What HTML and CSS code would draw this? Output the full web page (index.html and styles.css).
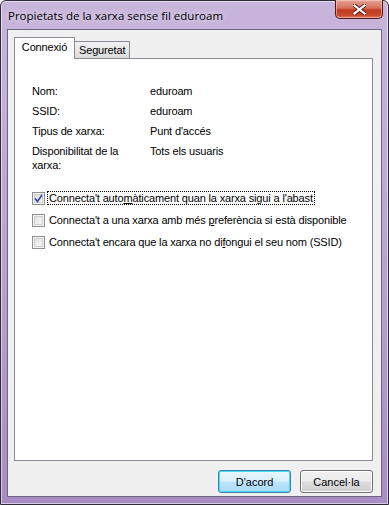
FILE: index.html
```html
<!DOCTYPE html>
<html lang="ca">
<head>
    <meta charset="UTF-8">
    <title>Propietats de la xarxa sense fil eduroam</title>
    <link rel="stylesheet" href="styles.css">
</head>
<body>
    <div class="finestra">
        <div class="barraTitol">
            <span class="titol">Propietats de la xarxa sense fil eduroam</span>
            <button class="tancar" title="Tanca">
                <svg width="13" height="11" viewBox="0 0 13 11">
                    <path d="M1.5 1.5 L11.5 9.5 M11.5 1.5 L1.5 9.5" stroke="#4a1a14" stroke-width="4" stroke-linecap="square"/>
                    <path d="M1.5 1.5 L11.5 9.5 M11.5 1.5 L1.5 9.5" stroke="#fff" stroke-width="2.2" stroke-linecap="square"/>
                </svg>
            </button>
        </div>
        <div class="client">
            <div class="pestanyes">
                <div class="pestanya activa">Connexió</div>
                <div class="pestanya">Seguretat</div>
            </div>
            <div class="panell">
                <div class="dades">
                    <div class="etiqueta">Nom:</div>
                    <div class="valor">eduroam</div>
                    <div class="etiqueta">SSID:</div>
                    <div class="valor">eduroam</div>
                    <div class="etiqueta">Tipus de xarxa:</div>
                    <div class="valor">Punt d'accés</div>
                    <div class="etiqueta">Disponibilitat de la<br>xarxa:</div>
                    <div class="valor">Tots els usuaris</div>
                </div>
                <div class="opcions">
                    <label class="opcio">
                        <span class="casella marcada">
                            <svg width="9" height="9" viewBox="0 0 9 9"><path d="M1 4.5 L3.5 7.5 L8 1" fill="none" stroke="#2a44a8" stroke-width="1.6"/></svg>
                        </span>
                        <span class="text focus">Connecta't auto<u>m</u>àticament quan la xarxa sigui a l'abast</span>
                    </label>
                    <label class="opcio">
                        <span class="casella"></span>
                        <span class="text">Connecta't a una xarxa amb més <u>p</u>referència si està disponible</span>
                    </label>
                    <label class="opcio">
                        <span class="casella"></span>
                        <span class="text">Connecta't encara que la xarxa no di<u>f</u>ongui el seu nom (SSID)</span>
                    </label>
                </div>
            </div>
            <div class="botons">
                <button class="boto predeterminat">D'acord</button>
                <button class="boto">Cancel·la</button>
            </div>
        </div>
    </div>
</body>
</html>
```

FILE: styles.css
```css
body {
    margin: 0;
    font-family: "Liberation Sans", Arial, sans-serif;
    font-size: 11px;
    letter-spacing: -0.15px;
    color: #000;
    background: #fff;
}
.finestra {
    width: 389px;
    height: 505px;
    box-sizing: border-box;
    border: 1px solid #2e2a36;
    border-radius: 6px 6px 0 0;
    background: linear-gradient(to bottom, #c8b5db 0%, #bda8d4 40%, #a98cc4 100%);
    box-shadow: inset 0 0 0 1px rgba(255, 255, 255, 0.55);
    display: flex;
    flex-direction: column;
}
.barraTitol {
    height: 28px;
    display: flex;
    align-items: flex-start;
    padding-left: 7px;
    padding-right: 5px;
}
.titol {
    font-family: "Open Sans", "Noto Sans", sans-serif;
    font-size: 11.5px;
    letter-spacing: 0;
    line-height: 28px;
    margin-top: 1px;
    color: #000;
    flex: 1;
    text-shadow: 0 0 6px rgba(255, 255, 255, 0.9);
}
.tancar {
    width: 48px;
    height: 19px;
    margin-top: -1px;
    padding: 0;
    border: 1px solid #4e1c17;
    border-top: none;
    border-radius: 0 0 5px 5px;
    background: linear-gradient(to bottom, #e6a394 0%, #d6705e 45%, #c23b22 55%, #c9492c 85%, #e0806a 100%);
    box-shadow: inset 0 0 0 1px rgba(255, 220, 210, 0.5);
    display: flex;
    align-items: center;
    justify-content: center;
}
.client {
    flex: 1;
    margin: 0 6px 7px 6px;
    background-color: #f0f0f0;
    border: 1px solid #6e6680;
    padding: 7px 8px 0 6px;
    display: flex;
    flex-direction: column;
}
.pestanyes {
    display: flex;
    align-items: flex-end;
    height: 21px;
    position: relative;
    z-index: 1;
}
.pestanya {
    height: 17px;
    line-height: 16px;
    padding: 0 4px;
    border: 1px solid #898c95;
    border-bottom: none;
    background: linear-gradient(to bottom, #f2f2f2, #dcdcdc);
    box-sizing: border-box;
    margin-left: -1px;
    width: 56px;
    text-align: center;
}
.pestanya.activa {
    height: 22px;
    line-height: 18px;
    margin-left: 0;
    margin-bottom: -1px;
    background: #fff;
    width: 61px;
}
.panell {
    height: 403px;
    box-sizing: border-box;
    background: #fff;
    border: 1px solid #898c95;
    padding: 25px 17px 0 17px;
}
.dades {
    display: grid;
    grid-template-columns: 118px 1fr;
    row-gap: 6px;
    line-height: 14px;
}
.opcions {
    margin-top: 19px;
    display: flex;
    flex-direction: column;
    gap: 8px;
}
.opcio {
    display: flex;
    align-items: center;
    height: 14px;
}
.casella {
    flex-shrink: 0;
    width: 13px;
    height: 13px;
    box-sizing: border-box;
    border: 1px solid #8e8f8f;
    background: linear-gradient(135deg, #dcdcdc 0%, #f0f0f0 60%, #fbfbfb 100%);
    box-shadow: inset 0 0 0 1px #f4f4f4, inset 0 0 0 2px #cfcfcf;
    display: flex;
    align-items: center;
    justify-content: center;
    margin-right: 3px;
}
.casella.marcada {
    background: linear-gradient(135deg, #d6d6d6 0%, #efefef 60%, #fafafa 100%);
}
.text {
    padding: 0 1px;
    white-space: nowrap;
}
.text.focus {
    outline: 1px dotted #000;
    outline-offset: 0;
}
.botons {
    display: flex;
    justify-content: flex-end;
    gap: 9px;
    padding-top: 9px;
}
.boto {
    width: 73px;
    height: 23px;
    font-family: "Liberation Sans", Arial, sans-serif;
    font-size: 11px;
    color: #000;
    border: 1px solid #707070;
    border-radius: 3px;
    background: linear-gradient(to bottom, #f2f2f2 0%, #ebebeb 48%, #dddddd 52%, #cfcfcf 100%);
    box-shadow: inset 0 0 0 1px #fcfcfc;
    padding: 0;
}
.boto.predeterminat {
    border-color: #3c7fb1;
    background: linear-gradient(to bottom, #eaf6fd 0%, #d9f0fc 48%, #bee6fd 52%, #a7d9f5 100%);
    box-shadow: inset 0 0 0 1px #48dcf5;
}
```
